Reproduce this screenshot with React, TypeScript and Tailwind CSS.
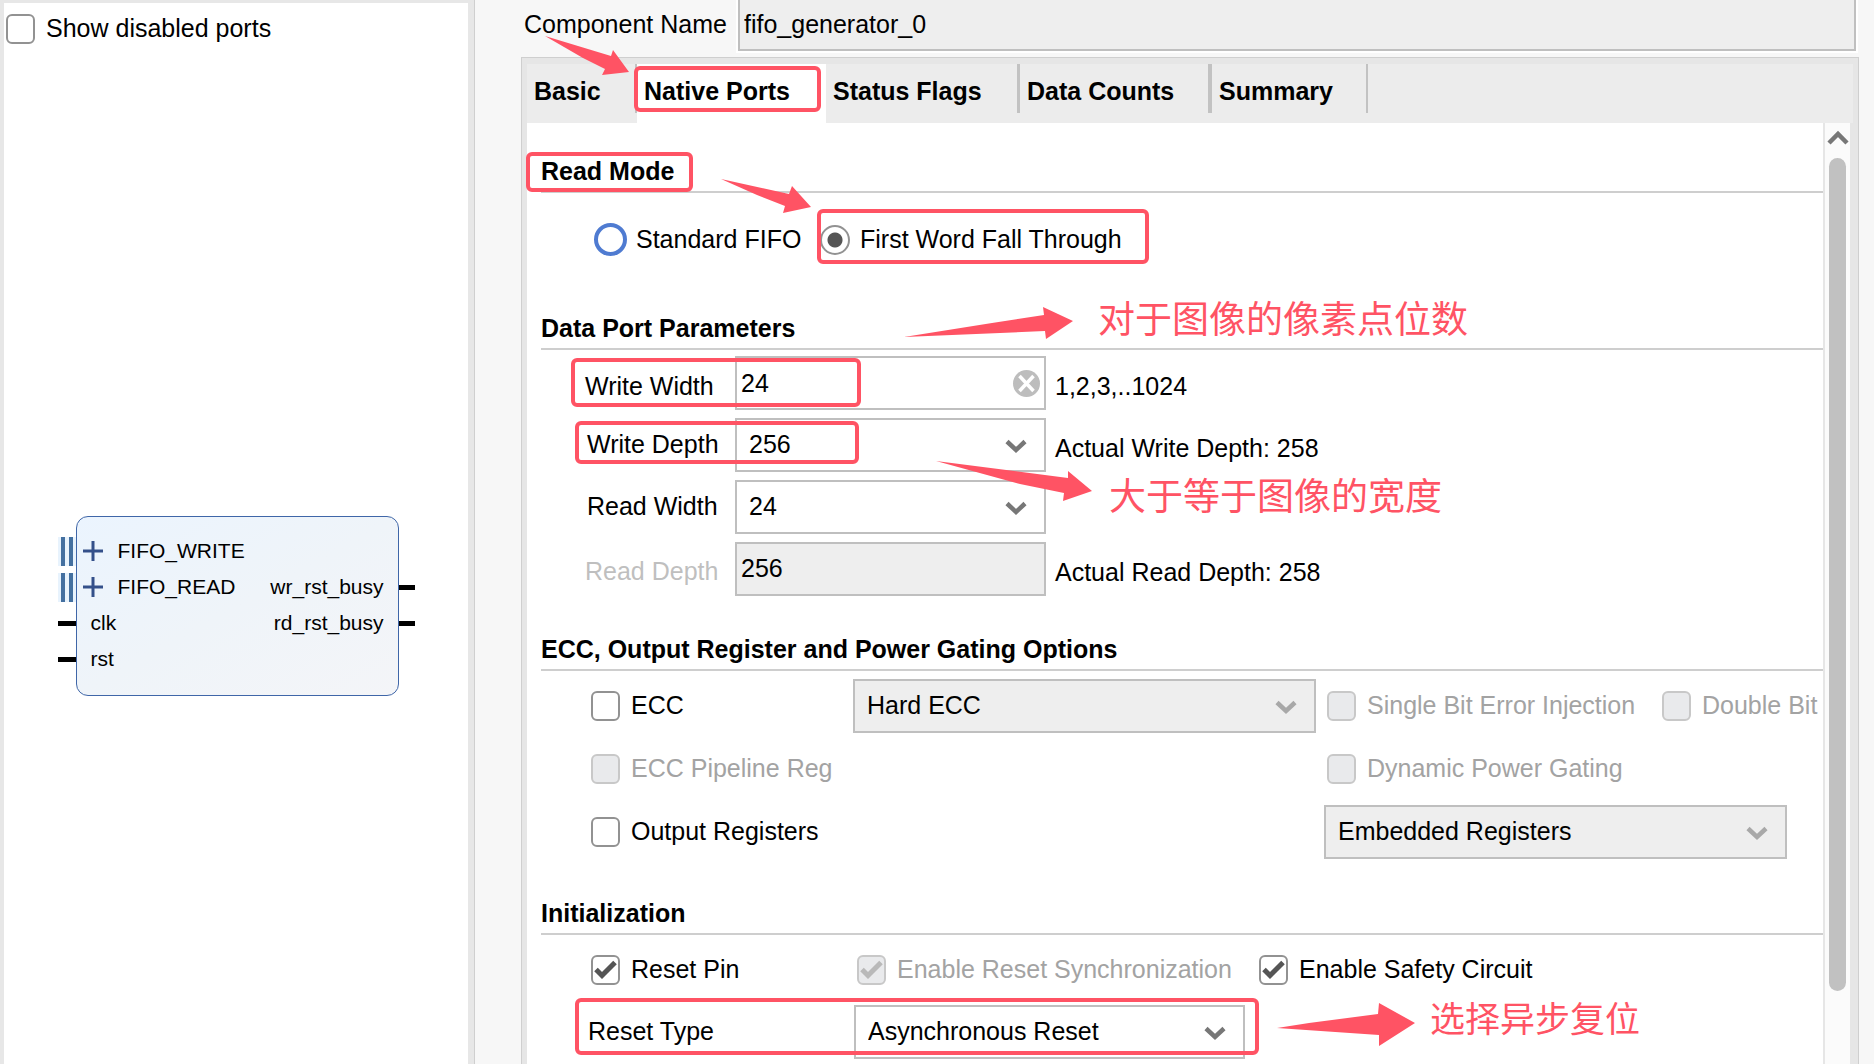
import React, { useState } from "react";

function Chevron({ className, up = false }: { className: string; up?: boolean }) {
  return (
    <svg viewBox="0 0 22 15" className={className} fill="none" stroke="currentColor" strokeWidth="4.5" aria-hidden="true">
      {up ? <path d="M2 13 L11 4 L20 13" /> : <path d="M2 2.5 L11 11 L20 2.5" />}
    </svg>
  );
}

function Check({
  label,
  defaultChecked = false,
  disabled = false,
}: {
  label: string;
  defaultChecked?: boolean;
  disabled?: boolean;
}) {
  return (
    <label className={disabled ? "flex items-center gap-[11px] whitespace-nowrap text-[#a3a3a3]" : "flex items-center gap-[11px] whitespace-nowrap"}>
      <span className="grid shrink-0">
        <input
          type="checkbox"
          defaultChecked={defaultChecked}
          disabled={disabled}
          className="peer col-start-1 row-start-1 h-[30px] w-[29px] appearance-none rounded-md border-2 border-[#929292] bg-white disabled:border-[#c8c8c8] disabled:bg-[#e9eaec]"
        />
        <svg
          viewBox="0 0 29 30"
          className="pointer-events-none col-start-1 row-start-1 hidden h-[30px] w-[29px] text-[#555555] peer-checked:block peer-disabled:text-[#b9b9b9]"
          fill="none"
          stroke="currentColor"
          strokeWidth="5"
          aria-hidden="true"
        >
          <path d="M5 14.5 L11 20.5 L24 7.5" />
        </svg>
      </span>
      <span className="pb-0.5 leading-7">{label}</span>
    </label>
  );
}

function Select({ id, label, options, disabled = false }: { id: string; label?: string; options: string[]; disabled?: boolean }) {
  return (
    <div className="relative w-full">
      <select
        id={id}
        aria-label={label}
        disabled={disabled}
        className="h-[54px] w-full appearance-none border-2 border-[#bfbfbf] bg-white pb-0.5 pl-3 pr-12 text-black disabled:bg-[#eeeeee] disabled:opacity-100"
      >
        {options.map((o) => (
          <option key={o}>{o}</option>
        ))}
      </select>
      <Chevron
        className={
          disabled
            ? "pointer-events-none absolute right-[19px] top-[21px] h-[15px] w-[22px] text-[#a8a8a8]"
            : "pointer-events-none absolute right-[19px] top-[21px] h-[15px] w-[22px] text-[#777777]"
        }
      />
    </div>
  );
}

function Section({ title, children }: { title: string; children: React.ReactNode }) {
  return (
    <section className="ml-3.5">
      <h2 className="h-10 border-b-2 border-[#cecece] font-bold leading-9">{title}</h2>
      {children}
    </section>
  );
}

function BusBars() {
  return (
    <span className="flex h-9 items-center">
      <span className="flex h-[29px] w-[18px] gap-1 bg-[#e8f3fd] pl-[3px]">
        <span className="w-1 bg-[#4470a0]" />
        <span className="w-1 bg-[#4470a0]" />
      </span>
    </span>
  );
}

function Pin() {
  return (
    <span className="flex h-9 items-center">
      <span className="h-[5px] w-full bg-black" />
    </span>
  );
}

function BusRow({ name }: { name: string }) {
  return (
    <button type="button" className="flex h-9 items-center gap-[15px] pl-1.5">
      <svg viewBox="0 0 20 20" className="h-5 w-5" stroke="#34508a" strokeWidth="3" aria-hidden="true">
        <path d="M0 10 H20 M10 0 V20" />
      </svg>
      <span>{name}</span>
    </button>
  );
}

function BlockSymbol() {
  return (
    <div className="flex self-center text-[21px]">
      <div className="w-[18px] py-[17px]">
        <BusBars />
        <BusBars />
        <Pin />
        <Pin />
      </div>
      <div className="flex w-[323px] justify-between rounded-xl border border-[#3f66a8] bg-linear-to-br from-[#ebf4fe] via-[#eff4f9] to-[#f4f5f8] pb-[18px] pt-4 leading-9">
        <div>
          <BusRow name="FIFO_WRITE" />
          <BusRow name="FIFO_READ" />
          <p className="pl-3.5">clk</p>
          <p className="pl-3.5">rst</p>
        </div>
        <div className="pr-3.5 pt-9 text-right">
          <p>wr_rst_busy</p>
          <p>rd_rst_busy</p>
        </div>
      </div>
      <div className="w-4 pt-[53px]">
        <Pin />
        <Pin />
      </div>
    </div>
  );
}

const tabs = [
  { name: "Basic", width: "w-[110px]", divider: "w-0.5" },
  { name: "Native Ports", width: "w-[189px]", divider: "w-0" },
  { name: "Status Flags", width: "w-[194px]", divider: "w-[3px]" },
  { name: "Data Counts", width: "w-[192px]", divider: "w-1" },
  { name: "Summary", width: "w-[156px]", divider: "w-0.5" },
];

function Tabs() {
  const [active, setActive] = useState("Native Ports");
  return (
    <div role="tablist" className="mr-[5px] flex h-[59px] bg-[#ececec]">
      {tabs.map((t) => (
        <button
          key={t.name}
          type="button"
          role="tab"
          aria-selected={t.name === active}
          onClick={() => setActive(t.name)}
          className={`${t.width} ${t.name === active ? "bg-white" : "bg-[#ececec]"} flex shrink-0 items-start justify-between pl-[7px] font-bold`}
        >
          <span className="whitespace-nowrap leading-[54px]">{t.name}</span>
          <span className={`${t.divider} h-[49px] bg-[#c2c2c2]`} />
        </button>
      ))}
    </div>
  );
}

function ReadMode() {
  return (
    <div className="flex h-[117px] items-start pl-[53px] pt-[30px]">
      <label className="flex h-[33px] w-[226px] items-center gap-[9px] whitespace-nowrap">
        <input type="radio" name="mode" className="h-[33px] w-[33px] shrink-0 appearance-none rounded-full border-4 border-[#4f7bd1]" />
        <span className="pb-0.5">Standard FIFO</span>
      </label>
      <label className="flex h-[33px] items-center gap-2.5 whitespace-nowrap">
        <input
          type="radio"
          name="mode"
          defaultChecked
          className="h-[30px] w-[30px] shrink-0 appearance-none rounded-full border-2 border-[#929292] bg-[radial-gradient(circle,#555555_7px,#ffffff_8px)]"
        />
        <span className="pb-0.5">First Word Fall Through</span>
      </label>
    </div>
  );
}

function ParamRow({
  id,
  label,
  labelClass = "",
  hint,
  children,
}: {
  id: string;
  label: string;
  labelClass?: string;
  hint?: string;
  children: React.ReactNode;
}) {
  return (
    <div className="grid h-[54px] grid-cols-[150px_311px_auto] items-center">
      <label htmlFor={id} className={labelClass}>
        {label}
      </label>
      {children}
      {hint && <span className="whitespace-nowrap pl-[9px] pt-1.5">{hint}</span>}
    </div>
  );
}

function DataPorts() {
  return (
    <div className="flex h-[281px] flex-col gap-2 pl-11 pt-1.5">
      <ParamRow id="ww" label="Write Width" labelClass="pt-1.5" hint="1,2,3,..1024">
        <div className="relative">
          <input id="ww" defaultValue="24" className="h-[54px] w-full border-2 border-[#bfbfbf] bg-white px-1" />
          <button type="button" aria-label="Clear" className="absolute right-1.5 top-3.5">
            <svg viewBox="0 0 27 27" className="h-[27px] w-[27px]" aria-hidden="true">
              <circle cx="13.5" cy="13.5" r="13.5" fill="#bdbdbd" />
              <path d="M6.5 6 L20.5 21 M20.5 6 L6.5 21" stroke="#ffffff" strokeWidth="3.5" />
            </svg>
          </button>
        </div>
      </ParamRow>
      <ParamRow id="wd" label="Write Depth" labelClass="pb-0.5 pl-0.5" hint="Actual Write Depth: 258">
        <Select id="wd" options={["256"]} />
      </ParamRow>
      <ParamRow id="rw" label="Read Width" labelClass="pb-0.5 pl-0.5">
        <Select id="rw" options={["24"]} />
      </ParamRow>
      <ParamRow id="rd" label="Read Depth" labelClass="pt-1 text-[#bfbfbf]" hint="Actual Read Depth: 258">
        <input id="rd" readOnly value="256" className="h-[54px] w-full border-2 border-[#bfbfbf] bg-[#eeeeee] px-1 pb-0.5" />
      </ParamRow>
    </div>
  );
}

function EccOptions() {
  return (
    <div className="h-56 pl-[50px] pt-2">
      <div className="grid h-[54px] grid-cols-[262px_463px_auto] items-center">
        <Check label="ECC" />
        <Select id="ecc-type" label="ECC type" options={["Hard ECC"]} disabled />
        <div className="grid grid-cols-[335px_auto] pl-[11px]">
          <Check label="Single Bit Error Injection" disabled />
          <Check label="Double Bit" disabled />
        </div>
      </div>
      <div className="grid h-[72px] grid-cols-[736px_auto] items-center">
        <Check label="ECC Pipeline Reg" disabled />
        <Check label="Dynamic Power Gating" disabled />
      </div>
      <div className="grid h-[54px] grid-cols-[733px_463px] items-center">
        <Check label="Output Registers" />
        <Select id="reg-type" label="Register type" options={["Embedded Registers"]} disabled />
      </div>
    </div>
  );
}

function Initialization() {
  return (
    <div className="pl-[47px] pt-[17px]">
      <div className="grid h-9 grid-cols-[266px_402px_auto] items-center pl-[3px]">
        <Check label="Reset Pin" defaultChecked />
        <Check label="Enable Reset Synchronization" defaultChecked disabled />
        <Check label="Enable Safety Circuit" defaultChecked />
      </div>
      <div className="mt-[17px] grid h-[54px] grid-cols-[266px_391px] items-center">
        <label htmlFor="reset-type" className="pb-0.5">
          Reset Type
        </label>
        <Select id="reset-type" options={["Asynchronous Reset"]} />
      </div>
    </div>
  );
}

/* Red highlight frames, arrows and notes laid over the dialog. */
const frames = [
  "left-[634px] top-[66px] h-[46px] w-[187px]",
  "left-[526px] top-[152px] h-[40px] w-[167px]",
  "left-[817px] top-[209px] h-[55px] w-[332px]",
  "left-[571px] top-[358px] h-[49px] w-[290px]",
  "left-[575px] top-[421px] h-[43px] w-[284px]",
  "left-[575px] top-[998px] h-[57px] w-[684px]",
];

const arrows = [
  "545,36 611,56 613,50 629,72 602,75 605,69 583,58",
  "721,179 789,194 792,186 811,207 783,213 785,206 757,195",
  "904,337 992,323 1044,315 1043,307 1073,321 1046,339 1045,331",
  "936,461 1068,478 1068,471 1092,491 1063,501 1064,493 1020,484",
  "1277,1028 1309,1023 1378,1014 1379,1003 1415,1023 1379,1046 1379,1035",
];

const notes = [
  { text: "对于图像的像素点位数", place: "left-[1098px] top-[297px]" },
  { text: "大于等于图像的宽度", place: "left-[1109px] top-[474px]" },
  { text: "选择异步复位", place: "left-[1430px] top-[997px]" },
];

function Annotations() {
  return (
    <div className="pointer-events-none absolute inset-0 overflow-hidden">
      {frames.map((f) => (
        <div key={f} className={`absolute rounded-md border-4 border-[#ff5364] ${f}`} />
      ))}
      <svg className="absolute left-0 top-0 h-[1064px] w-[1874px]" viewBox="0 0 1874 1064" fill="#ff5364" aria-hidden="true">
        {arrows.map((a) => (
          <polygon key={a} points={a} />
        ))}
      </svg>
      {notes.map((n) => (
        <p
          key={n.text}
          className={`absolute whitespace-nowrap font-['Noto_Sans_CJK_SC',sans-serif] leading-10 text-[#ff5364] ${n.place} ${n.text.length > 6 ? "text-[37px]" : "text-[35px]"}`}
        >
          {n.text}
        </p>
      ))}
    </div>
  );
}

export default function App() {
  return (
    <div className="relative flex h-screen overflow-hidden bg-[#f7f7f7] font-['Liberation_Sans',Arial,sans-serif] text-[25px] leading-7 text-black">
      <aside className="flex w-[475px] shrink-0 flex-col border-r border-[#cfcfcf] bg-[#e7e7e7] pl-1 pr-1.5 pt-[3px]">
        <div className="flex flex-1 flex-col bg-white">
          <div className="mb-[472px] ml-0.5 mt-[11px]">
            <Check label="Show disabled ports" />
          </div>
          <BlockSymbol />
        </div>
      </aside>

      <main className="flex min-w-0 flex-1 flex-col pl-[46px] pr-[15px]">
        <div className="flex h-[57px] shrink-0 items-start">
          <label htmlFor="component-name" className="w-[215px] shrink-0 whitespace-nowrap pl-[3px] leading-[49px]">
            Component Name
          </label>
          <div className="mr-px flex-1 border-2 border-t-0 border-white">
            <input
              id="component-name"
              readOnly
              value="fifo_generator_0"
              className="block h-[51px] w-full border-2 border-t-0 border-[#bfbfbf] bg-[#eeeeee] px-1"
            />
          </div>
        </div>

        <div className="flex min-h-0 flex-1 flex-col border border-b-0 border-[#cfcfcf] bg-[#e6e6e6] pl-[5px] pt-1.5">
          <Tabs />
          <div className="mr-2 flex min-h-0 flex-1">
            <div className="min-w-0 flex-1 overflow-hidden bg-white pt-[30px]">
              <Section title="Read Mode">
                <ReadMode />
              </Section>
              <Section title="Data Port Parameters">
                <DataPorts />
              </Section>
              <Section title="ECC, Output Register and Power Gating Options">
                <EccOptions />
              </Section>
              <Section title="Initialization">
                <Initialization />
              </Section>
            </div>
            <div className="flex w-[27px] shrink-0 flex-col items-center border-l-2 border-[#e6e6e6] bg-[#fbfbfb] pb-[73px]">
              <button type="button" aria-label="Scroll up" className="flex h-[35px] items-start pt-[7px]">
                <Chevron up className="h-[15px] w-[22px] text-[#777777]" />
              </button>
              <div className="w-[17px] flex-1 rounded-full bg-[#c1c1c1]" />
            </div>
          </div>
        </div>
      </main>

      <Annotations />
    </div>
  );
}
